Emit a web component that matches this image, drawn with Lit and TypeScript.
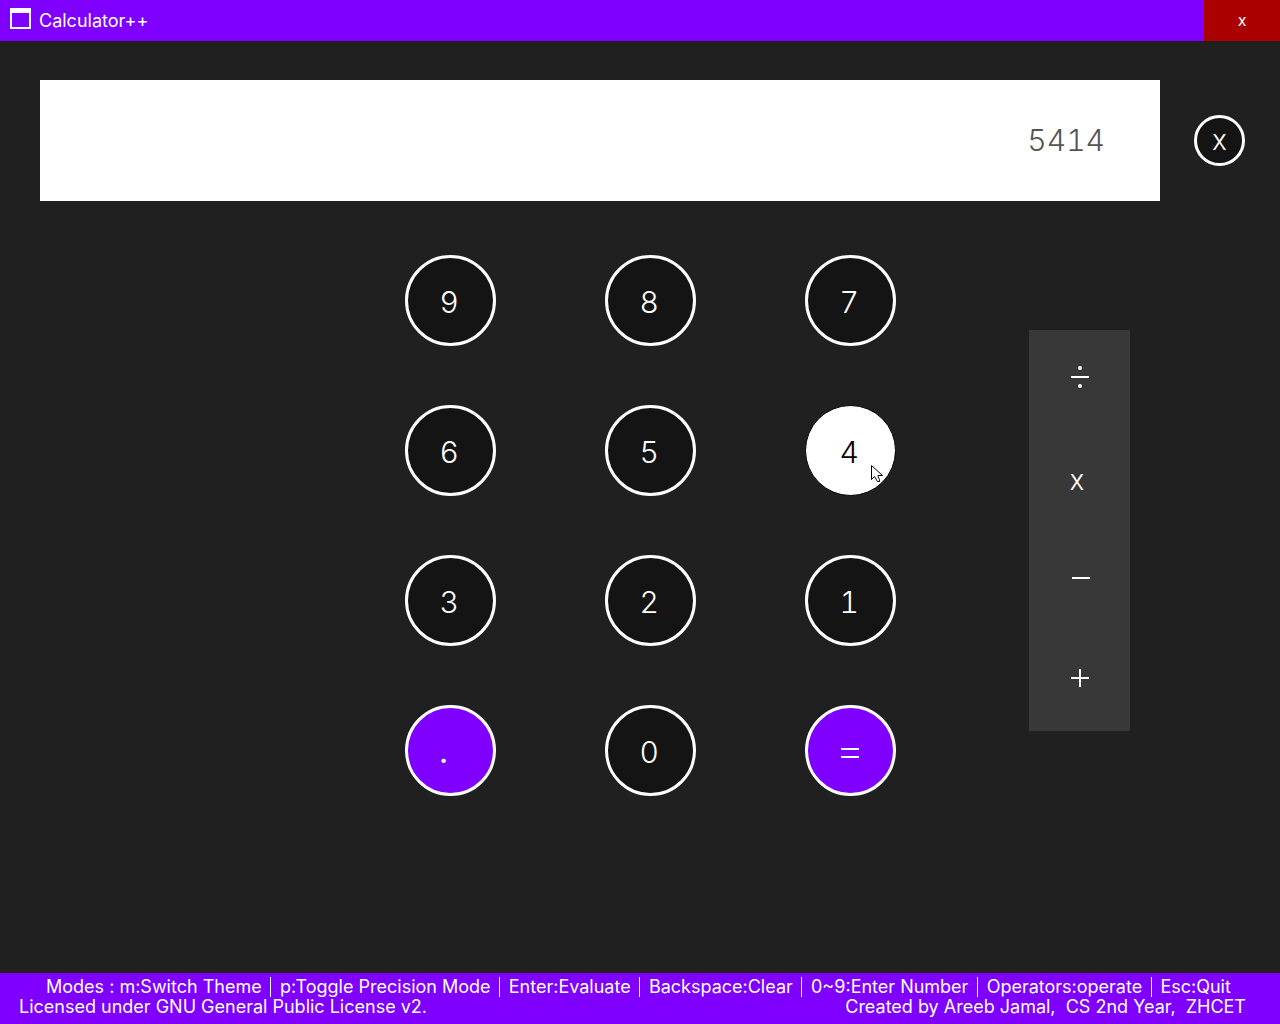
import { LitElement, html, css, svg, nothing } from "lit";
import { customElement, property, state } from "lit/decorators.js";
import { classMap } from "lit/directives/class-map.js";

const SYMBOLS = {
  "/": svg`<rect x="1" y="8" width="18" height="2"/><circle cx="10" cy="0" r="2"/><circle cx="10" cy="18" r="2"/>`,
  "-": svg`<rect x="2" y="9" width="18" height="2"/>`,
  "+": svg`<rect x="1" y="9" width="18" height="2"/><rect x="9" y="1" width="2" height="18"/>`,
  "=": svg`<rect x="1" y="8" width="18" height="2"/><rect x="1" y="16" width="18" height="2"/>`,
};

const symbol = (name: keyof typeof SYMBOLS) => html`
  <svg class="symbol" viewBox="0 0 20 24" width="20" height="24" aria-hidden="true">${SYMBOLS[name]}</svg>
`;

@customElement("calc-key")
export class CalcKey extends LitElement {
  static styles = css`
    :host {
      display: block;
      position: relative;
    }
    .key {
      display: flex;
      align-items: center;
      justify-content: center;
      box-sizing: border-box;
      width: 91px;
      height: 91px;
      padding: 2px 2px 0 0;
      border: 3px solid #fff;
      border-radius: 50%;
      background: #141414;
      color: #fff;
      font: 300 30px/36px Inter, sans-serif;
      font-variant-numeric: tabular-nums;
    }
    .accent {
      background: #7f00ff;
      font-weight: 500;
    }
    .active {
      border: 1px solid #000;
      background: #fff;
      color: #000;
    }
    .label {
      width: 20px;
      text-align: left;
    }
    .symbol {
      overflow: visible;
      fill: currentColor;
    }
    .pointer {
      position: absolute;
      left: 66px;
      top: 60px;
      pointer-events: none;
    }
  `;

  @property() label = "";
  @property({ type: Boolean }) accent = false;
  @property({ type: Boolean }) active = false;

  render() {
    return html`
      <button
        class=${classMap({ key: true, accent: this.accent, active: this.active })}
        aria-label=${this.label === "=" ? "Equals" : nothing}
      >
        ${this.label === "=" ? symbol("=") : html`<span class="label">${this.label}</span>`}
      </button>
      ${this.active
        ? html`<svg class="pointer" width="12" height="18" viewBox="0 0 12 18" aria-hidden="true">
            <path d="M.5 .5V14.5L3.5 11.5L6.5 16.5H8.5V14.5L7 11.5V10.5H11.5Z" fill="#fff" stroke="#000" />
          </svg>`
        : nothing}
    `;
  }
}

@customElement("app-root")
export class AppRoot extends LitElement {
  static styles = css`
    :host {
      display: flex;
      flex-direction: column;
      min-height: 100vh;
      background: #202020;
      color: #fff;
      font: 400 18px/20px Inter, sans-serif;
    }
    .titlebar {
      display: flex;
      height: 41px;
      background: #7f00ff;
    }
    .title {
      display: flex;
      flex: 1;
      align-items: center;
      gap: 8px;
      margin: 0;
      padding-left: 10px;
      font: inherit;
    }
    .window-icon {
      margin-bottom: 4px;
    }
    button {
      padding: 0 0 2px;
      border: 0;
      color: #fff;
    }
    .close {
      width: 76px;
      background: #aa0000;
      font: 400 16px/20px Inter, sans-serif;
    }
    .readout {
      display: flex;
      align-items: center;
      gap: 34px;
      padding: 39px 35px 0 40px;
    }
    .display {
      flex: 1;
      min-width: 0;
      box-sizing: border-box;
      height: 121px;
      padding: 0 55px 2px;
      border: 0;
      border-radius: 0;
      background: #fff;
      color: #555;
      font: 300 30px/36px Inter, sans-serif;
      font-variant-numeric: tabular-nums;
      text-align: right;
    }
    .clear {
      box-sizing: border-box;
      width: 51px;
      height: 51px;
      border: 3px solid #fff;
      border-radius: 50%;
      background: #141414;
      font: 300 28px/36px Inter, sans-serif;
    }
    .pad {
      display: grid;
      flex: 1;
      grid-template-columns: 1fr auto 1fr;
      align-items: start;
      padding: 54px 0 54px 21px;
    }
    .keys {
      display: grid;
      grid-column: 2;
      grid-template-columns: repeat(3, auto);
      gap: 59px 109px;
    }
    .operators {
      display: grid;
      width: 101px;
      margin: 75px 0 0 133px;
      padding-bottom: 1px;
      background: #383838;
    }
    .operator {
      display: flex;
      align-items: center;
      justify-content: center;
      height: 100px;
      padding: 0;
      background: transparent;
      font: 300 28px/36px Inter, sans-serif;
    }
    .label {
      width: 20px;
      text-align: left;
    }
    .symbol {
      overflow: visible;
      fill: currentColor;
    }
    .footer {
      padding: 4px 34px 7px 19px;
      background: #7f00ff;
    }
    .modes {
      display: flex;
      justify-content: space-between;
      padding: 0 15px 0 27px;
      white-space: pre;
    }
    .rule {
      width: 1px;
      background: #fff;
    }
    .credits {
      display: flex;
      justify-content: space-between;
      white-space: pre;
    }
  `;

  @state() private value = "5414";

  private keys = ["9", "8", "7", "6", "5", "4", "3", "2", "1", ".", "0", "="];
  private modes = [
    "Modes : m:Switch Theme",
    "p:Toggle Precision Mode",
    "Enter:Evaluate",
    "Backspace:Clear",
    "0~9:Enter Number",
    "Operators:operate",
    "Esc:Quit",
  ];

  private press(key: string) {
    if (key !== "=") this.value += key;
  }

  render() {
    return html`
      <header class="titlebar">
        <h1 class="title">
          <svg class="window-icon" width="21" height="21" viewBox="0 0 21 21" aria-hidden="true">
            <path d="M0 0H21V21H0ZM2 5V19H19V5Z" fill="#fff" fill-rule="evenodd" />
          </svg>
          Calculator++
        </h1>
        <button class="close">x</button>
      </header>
      <section class="readout">
        <input class="display" aria-label="Result" readonly .value=${this.value} />
        <button class="clear" @click=${() => (this.value = "")}>x</button>
      </section>
      <main class="pad">
        <div class="keys">
          ${this.keys.map(
            (key) => html`<calc-key
              .label=${key}
              ?accent=${key === "." || key === "="}
              ?active=${key === "4"}
              @click=${() => this.press(key)}
            ></calc-key>`
          )}
        </div>
        <div class="operators">
          <button class="operator" aria-label="Divide">${symbol("/")}</button>
          <button class="operator"><span class="label">x</span></button>
          <button class="operator" aria-label="Subtract">${symbol("-")}</button>
          <button class="operator" aria-label="Add">${symbol("+")}</button>
        </div>
      </main>
      <footer class="footer">
        <div class="modes">
          ${this.modes.map(
            (mode, i) => html`${i ? html`<span class="rule"></span>` : nothing}<span>${mode}</span>`
          )}
        </div>
        <div class="credits">
          <span>Licensed under GNU General Public License v2.</span>
          <span>Created by Areeb Jamal,  CS 2nd Year,  ZHCET</span>
        </div>
      </footer>
    `;
  }
}
